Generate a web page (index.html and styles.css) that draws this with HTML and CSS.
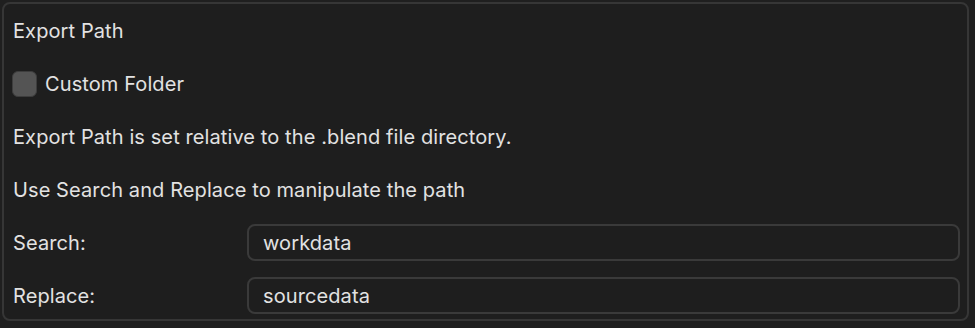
FILE: index.html
```html
<!DOCTYPE html>
<html>
<head>
<meta charset="utf-8">
<link rel="stylesheet" href="styles.css">
</head>
<body>
<div class="panel">
  <div class="row"><span class="text">Export Path</span></div>
  <div class="row">
    <label class="check"><span class="box"></span><span class="text">Custom Folder</span></label>
  </div>
  <div class="row"><span class="text">Export Path is set relative to the .blend file directory.</span></div>
  <div class="row"><span class="text">Use Search and Replace to manipulate the path</span></div>
  <div class="row field">
    <span class="label">Search:</span>
    <div class="input">workdata</div>
  </div>
  <div class="row field">
    <span class="label">Replace:</span>
    <div class="input">sourcedata</div>
  </div>
</div>
</body>
</html>
```
FILE: styles.css
```css
html, body {
  margin: 0;
  padding: 0;
  background: #1f1f1f;
}
body {
  width: 975px;
  height: 328px;
  overflow: hidden;
  font-family: Inter, "Noto Sans", sans-serif;
  font-size: 20px;
  letter-spacing: 0.1px;
  color: #e2e2e2;
}
.panel {
  margin: 2px 0 0 2px;
  width: 967px;
  height: 319px;
  box-sizing: border-box;
  border: 2px solid #363636;
  border-radius: 8px;
  background: #1e1e1e;
  padding: 0 7px 0 9px;
  display: flex;
  flex-direction: column;
}
.row {
  height: 53px;
  display: flex;
  align-items: center;
  flex: none;
}
.check {
  display: flex;
  align-items: center;
  gap: 8px;
}
.box {
  width: 25px;
  height: 26px;
  box-sizing: border-box;
  background: #545454;
  border: 1px solid #3d3d3d;
  border-radius: 6px;
  margin-left: -1px;
}
.field .label {
  width: 234px;
  flex: none;
}
.input {
  flex: 1;
  height: 37px;
  box-sizing: border-box;
  border: 2px solid #3a3a3a;
  border-radius: 8px;
  background: #1e1e1e;
  padding: 0 14px;
  display: flex;
  align-items: center;
}
```
